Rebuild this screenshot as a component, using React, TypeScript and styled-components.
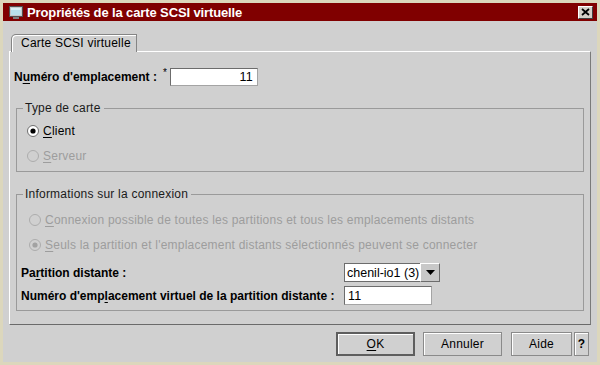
import React from 'react';
import styled, { createGlobalStyle } from 'styled-components';

const GlobalStyle = createGlobalStyle`
  html, body {
    margin: 0;
    padding: 0;
    background: #d0d0d0;
  }
  body {
    font-family: "Liberation Sans", Arial, sans-serif;
    font-size: 12px;
    letter-spacing: 0.22px;
    color: #000;
  }
`;

const Window = styled.div`
  width: 600px;
  height: 365px;
  box-sizing: border-box;
  border: 3px solid #dcd7bc;
  background: #d0d0d0;
  display: flex;
  flex-direction: column;
`;

const TitleBar = styled.div`
  flex: none;
  height: 18px;
  background: #800000;
  display: flex;
  align-items: center;
  gap: 4px;
  padding: 0 4px 0 3px;
`;

const TitleText = styled.span`
  flex: 1;
  color: #fff;
  font-weight: bold;
  font-size: 13px;
  letter-spacing: -0.12px;
  white-space: nowrap;
`;

const CloseButton = styled.div`
  width: 15px;
  height: 13px;
  box-sizing: border-box;
  background: #d4d0c8;
  border-top: 1px solid #fff;
  border-left: 1px solid #fff;
  border-right: 1px solid #404040;
  border-bottom: 1px solid #404040;
  display: flex;
  align-items: center;
  justify-content: center;
`;

const Body = styled.div`
  flex: 1;
  display: flex;
  flex-direction: column;
  padding: 13px 6px 0 6px;
`;

const TabStrip = styled.div`
  height: 17px;
  display: flex;
  padding-left: 2px;
`;

const Tab = styled.div`
  position: relative;
  z-index: 1;
  width: 126px;
  height: 18px;
  margin-bottom: -1px;
  box-sizing: border-box;
  border: 1px solid #858585;
  border-bottom: none;
  border-top-left-radius: 5px;
  box-shadow: inset 1px 1px 0 #fff;
  background: #d0d0d0;
  padding-left: 9px;
  line-height: 16px;
  white-space: nowrap;
`;

const Panel = styled.div`
  height: 274px;
  box-sizing: border-box;
  border-top: 1px solid #fff;
  border-left: 1px solid #fff;
  border-right: 1px solid #7a7a7a;
  border-bottom: 1px solid #6a6a6a;
  padding: 16px 4px 0 4px;
`;

const SlotRow = styled.div`
  display: flex;
  align-items: center;
  height: 18px;
`;

const SlotLabel = styled.span`
  width: 148px;
  font-weight: bold;
  letter-spacing: 0;
  white-space: nowrap;
`;

const Asterisk = styled.span`
  width: 8px;
  align-self: flex-start;
  font-size: 10px;
  line-height: 10px;
  padding-left: 1px;
  box-sizing: border-box;
`;

const TextField = styled.div<{ $width: number; $height: number; $align?: string }>`
  width: ${p => p.$width}px;
  height: ${p => p.$height}px;
  box-sizing: border-box;
  background: #fff;
  border-top: 1px solid #6c6c6c;
  border-left: 1px solid #6c6c6c;
  border-right: 1px solid #a4a4a4;
  border-bottom: 1px solid #a4a4a4;
  padding: 0 4px 0 3px;
  display: flex;
  align-items: center;
  justify-content: ${p => (p.$align === 'right' ? 'flex-end' : 'flex-start')};
  font-size: 12.5px;
`;

const Group = styled.div<{ $pad: string }>`
  position: relative;
  margin: 22px 2px 0 2px;
  border: 1px solid #9a9a9a;
  padding: ${p => p.$pad};
`;

const Legend = styled.span`
  position: absolute;
  top: -8px;
  left: 6px;
  padding: 0 3px 0 2px;
  line-height: 14px;
  background: #d0d0d0;
  color: #1a1a1a;
  white-space: nowrap;
`;

const RadioList = styled.div<{ $indent: number }>`
  display: flex;
  flex-direction: column;
  gap: 5px;
  margin-left: ${p => p.$indent}px;
`;

const RadioRow = styled.div<{ $disabled?: boolean }>`
  height: 20px;
  display: flex;
  align-items: center;
  gap: 4px;
  color: ${p => (p.$disabled ? '#9d9d9d' : '#000')};
  white-space: nowrap;
`;

const Mn = styled.span`
  text-decoration: underline;
  text-underline-offset: 2px;
`;

const FieldGrid = styled.div`
  margin-top: 8px;
  display: grid;
  grid-template-columns: 323px auto;
  grid-template-rows: 19px 19px;
  row-gap: 4px;
  align-items: center;
  justify-items: start;
`;

const FieldLabel = styled.span`
  font-weight: bold;
  letter-spacing: 0;
  white-space: nowrap;
`;

const Combo = styled.div`
  display: flex;
  width: 96px;
  height: 19px;
`;

const ComboText = styled.div`
  flex: 1;
  box-sizing: border-box;
  background: #fff;
  border: 1px solid #6c6c6c;
  border-right: none;
  padding-left: 2px;
  display: flex;
  align-items: center;
  font-size: 12.5px;
  letter-spacing: 0;
  white-space: nowrap;
  overflow: hidden;
`;

const ComboArrow = styled.div`
  width: 20px;
  box-sizing: border-box;
  background: #c8c8c8;
  border-top: 1px solid #fff;
  border-left: 1px solid #fff;
  border-right: 1px solid #6c6c6c;
  border-bottom: 1px solid #6c6c6c;
  display: flex;
  align-items: center;
  justify-content: center;
`;

const ButtonRow = styled.div`
  margin-top: 7px;
  display: flex;
  justify-content: flex-end;
  gap: 8px;
  padding-right: 2px;
`;

const HelpPair = styled.div`
  display: flex;
  gap: 2px;
  margin-left: 1px;
`;

const Button = styled.div<{ $width: number; $default?: boolean }>`
  width: ${p => p.$width}px;
  height: 24px;
  box-sizing: border-box;
  background: #d0d0d0;
  border: ${p => (p.$default ? '2px solid #5e5e5e' : '1px solid #8a8a8a')};
  box-shadow: inset 1px 1px 0 #fff;
  display: flex;
  align-items: center;
  justify-content: center;
  font-size: 12px;
`;

const HelpButton = styled(Button)`
  font-weight: bold;
`;

const WindowIcon = () => (
  <svg width="14" height="13" viewBox="0 0 14 13" style={{ marginLeft: 3, flex: 'none' }}>
    <rect x="0.5" y="0.5" width="13" height="10" fill="#c8c8c8" stroke="#505050" />
    <rect x="2" y="2" width="10" height="7" fill="#b9e2ec" />
    <rect x="2" y="2" width="10" height="2" fill="#d8f0f4" />
    <rect x="4" y="11" width="6" height="2" fill="#808080" />
  </svg>
);

const CloseGlyph = () => (
  <svg width="9" height="8" viewBox="0 0 9 8">
    <path d="M1 1 L8 7 M8 1 L1 7" stroke="#000" strokeWidth="1.8" />
  </svg>
);

const Radio = ({ checked, disabled }: { checked?: boolean; disabled?: boolean }) => (
  <svg width="12" height="12" viewBox="0 0 12 12" style={{ flex: 'none' }}>
    <circle
      cx="6"
      cy="6"
      r="5.5"
      fill={disabled ? '#d0d0d0' : '#fff'}
      stroke={disabled ? '#acacac' : '#6e6e6e'}
    />
    {checked && <circle cx="6" cy="6" r="2.6" fill={disabled ? '#a2a2a2' : '#000'} />}
  </svg>
);

const DownArrow = () => (
  <svg width="9" height="5" viewBox="0 0 9 5">
    <path d="M0 0 H9 L4.5 5 Z" fill="#000" />
  </svg>
);

export default function App() {
  return (
    <>
      <GlobalStyle />
      <Window>
        <TitleBar>
          <WindowIcon />
          <TitleText>Propriétés de la carte SCSI virtuelle</TitleText>
          <CloseButton>
            <CloseGlyph />
          </CloseButton>
        </TitleBar>
        <Body>
          <TabStrip>
            <Tab>Carte SCSI virtuelle</Tab>
          </TabStrip>
          <Panel>
            <SlotRow>
              <SlotLabel>
                N<Mn>u</Mn>méro d'emplacement :
              </SlotLabel>
              <Asterisk>*</Asterisk>
              <TextField $width={88} $height={18} $align="right">11</TextField>
            </SlotRow>

            <Group $pad="12px 0 5px 0">
              <Legend>Type de carte</Legend>
              <RadioList $indent={10}>
                <RadioRow>
                  <Radio checked />
                  <span>
                    <Mn>C</Mn>lient
                  </span>
                </RadioRow>
                <RadioRow $disabled>
                  <Radio disabled />
                  <span>
                    <Mn>S</Mn>erveur
                  </span>
                </RadioRow>
              </RadioList>
            </Group>

            <Group $pad="15px 0 5px 4px">
              <Legend>Informations sur la connexion</Legend>
              <RadioList $indent={8}>
                <RadioRow $disabled>
                  <Radio disabled />
                  <span>
                    <Mn>C</Mn>onnexion possible de toutes les partitions et tous les emplacements distants
                  </span>
                </RadioRow>
                <RadioRow $disabled>
                  <Radio checked disabled />
                  <span>
                    <Mn>S</Mn>euls la partition et l'emplacement distants sélectionnés peuvent se connecter
                  </span>
                </RadioRow>
              </RadioList>
              <FieldGrid>
                <FieldLabel>
                  Pa<Mn>r</Mn>tition distante :
                </FieldLabel>
                <Combo>
                  <ComboText>chenil-io1 (3)</ComboText>
                  <ComboArrow>
                    <DownArrow />
                  </ComboArrow>
                </Combo>
                <FieldLabel>
                  Numéro d'emp<Mn>l</Mn>acement virtuel de la partition distante :
                </FieldLabel>
                <TextField $width={88} $height={19}>11</TextField>
              </FieldGrid>
            </Group>
          </Panel>
          <ButtonRow>
            <Button $width={79} $default>
              <span>
                <Mn>O</Mn>K
              </span>
            </Button>
            <Button $width={79}>Annuler</Button>
            <HelpPair>
              <Button $width={61}>Aide</Button>
              <HelpButton $width={15}>?</HelpButton>
            </HelpPair>
          </ButtonRow>
        </Body>
      </Window>
    </>
  );
}
